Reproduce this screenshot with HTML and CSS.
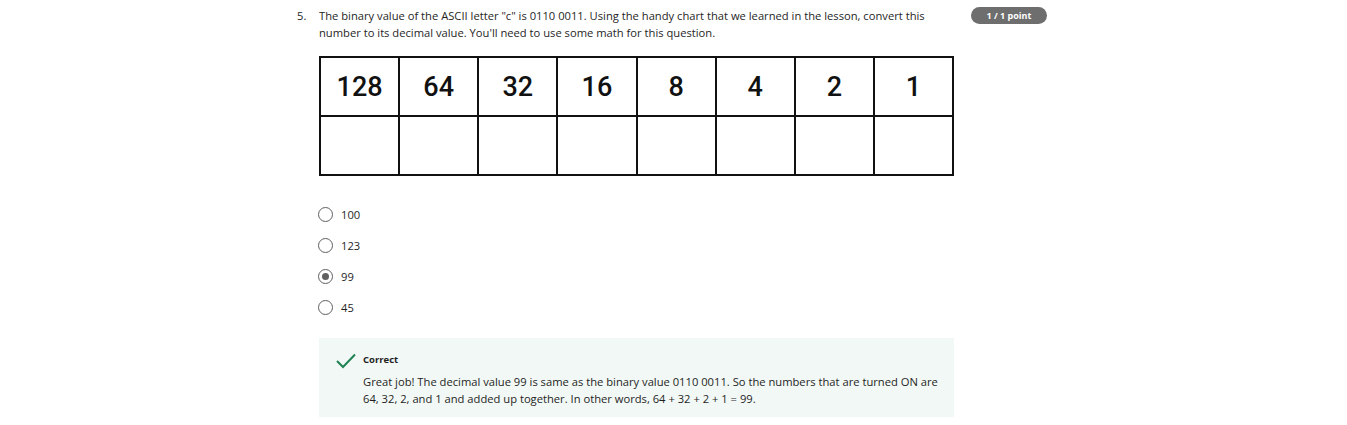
FILE: index.html
```html
<!DOCTYPE html>
<html>
<head>
<meta charset="utf-8">
<link rel="stylesheet" href="styles.css">
</head>
<body>
<div class="page">
  <div class="question">
    <div class="num">5.</div>
    <div class="qbody">
      <p class="prompt">The binary value of the ASCII letter "c" is 0110 0011. Using the handy chart that we learned in the lesson, convert this number to its decimal value. You'll need to use some math for this question.</p>
      <table class="chart">
        <tr><td>128</td><td>64</td><td>32</td><td>16</td><td>8</td><td>4</td><td>2</td><td>1</td></tr>
        <tr><td></td><td></td><td></td><td></td><td></td><td></td><td></td><td></td></tr>
      </table>
      <div class="options">
        <div class="opt"><span class="radio"></span><span>100</span></div>
        <div class="opt"><span class="radio"></span><span>123</span></div>
        <div class="opt"><span class="radio checked"></span><span>99</span></div>
        <div class="opt"><span class="radio"></span><span>45</span></div>
      </div>
      <div class="feedback">
        <svg class="check" width="20" height="16" viewBox="0 0 20 16"><path d="M1 8 L7 14 L19 1.5" fill="none" stroke="#1f8354" stroke-width="2"/></svg>
        <div class="fbtext">
          <div class="fbtitle">Correct</div>
          <p>Great job! The decimal value 99 is same as the binary value 0110 0011. So the numbers that are turned ON are 64, 32, 2, and 1 and added up together. In other words, 64 + 32 + 2 + 1 = 99.</p>
        </div>
      </div>
    </div>
    <div class="badge">1 / 1 point</div>
  </div>
</div>
</body>
</html>
```
FILE: styles.css
```css
html, body { margin: 0; padding: 0; background: #fff; }
body { font-family: "Open Sans", "Liberation Sans", sans-serif; color: #1f1f1f; font-size: 11.2px; }
.page { padding-left: 297px; padding-top: 7px; }
.question { display: flex; align-items: flex-start; }
.num { width: 22px; line-height: 17px; flex-shrink: 0; }
.qbody { width: 636px; flex-shrink: 0; }
.prompt { margin: 0; line-height: 17px; }
.chart { border-collapse: collapse; width: 635px; margin-top: 15px; font-family: Roboto, sans-serif; font-weight: 500; font-size: 27px; color: #111; }
.chart td { border: 2px solid #111; height: 57px; text-align: center; width: 12.5%; padding: 0; }
.options { margin-top: 30px; display: flex; flex-direction: column; gap: 14px; }
.opt { display: flex; align-items: center; height: 17px; line-height: 17px; }
.radio { width: 13px; height: 13px; border: 1.5px solid #5f5f5f; border-radius: 50%; margin-left: -1px; margin-right: 8px; display: inline-flex; align-items: center; justify-content: center; }
.radio.checked::after { content: ""; width: 7px; height: 7px; border-radius: 50%; background: #5f5f5f; }
.feedback { margin-top: 22px; background: #f2f8f5; width: 635px; box-sizing: border-box; padding: 13px 16px 10px 17px; display: flex; }
.check { flex-shrink: 0; margin-top: 2px; margin-right: 7px; }
.fbtitle { font-weight: 700; font-size: 9.5px; line-height: 14px; margin-top: 2px; }
.fbtext p { margin: 6px 0 0; line-height: 17px; }
.badge { flex-shrink: 0; margin-left: 16px; width: 76px; height: 17px; border-radius: 9px; background: #6e6e6e; color: #fff; font-weight: 700; font-size: 9px; line-height: 17px; text-align: center; }
```
